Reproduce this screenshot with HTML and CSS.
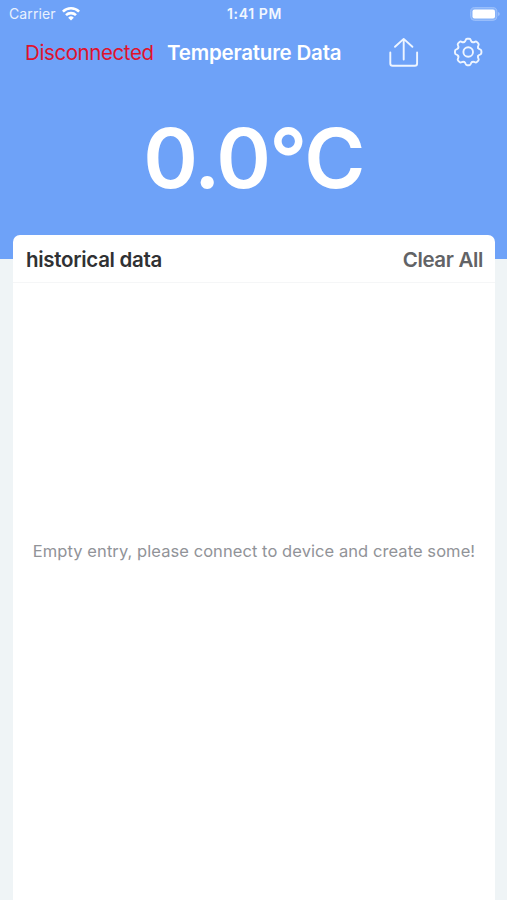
FILE: index.html
```
<!DOCTYPE html>
<html lang="en">
<head>
<meta charset="utf-8">
<title>Temperature Data</title>
<link rel="stylesheet" href="styles.css">
</head>
<body>
<div class="hero">
  <div class="status">
    <div class="carrier"><span>Carrier</span>
      <svg class="wifi" width="18" height="14" viewBox="0 0 18 14" fill="none" stroke="#fff" stroke-width="2.6"><path d="M.9 4.6a11.6 11.6 0 0 1 16.2 0M4 8.1a7.2 7.2 0 0 1 10 0"/><path d="M9 13.5 6.2 10.7a4 4 0 0 1 5.6 0z" fill="#fff" stroke="none"/></svg>
    </div>
    <div class="time">1:41 PM</div>
    <svg class="battery" width="31" height="14" viewBox="0 0 31 14"><rect x="1.6" y=".6" width="26.3" height="12.8" rx="4" fill="#86b2f9" stroke="#9cc0fb"/><rect x="3.5" y="2.5" width="22.5" height="9" rx="2" fill="#fff"/><path d="M29 5v4q1.8-.6 1.8-2t-1.8-2z" fill="#9cc0fb"/></svg>
  </div>
  <div class="nav">
    <span class="state">Disconnected</span>
    <h1 class="title">Temperature Data</h1>
    <svg class="share" width="30" height="30" viewBox="0 0 30 30" fill="none" stroke="#eef5ff" stroke-width="1.9" stroke-linecap="round" stroke-linejoin="round"><path d="M1.3 15.5v10.9q0 2.3 2.3 2.3h22.2q2.3 0 2.3-2.3V15.5M14.7 22.5V2M6 9.8l8.7-7.9 8.7 7.9"/></svg>
    <svg class="gear" width="30" height="30" viewBox="-15.2 -15 30 30" fill="none" stroke="#eef5ff" stroke-width="1.9" stroke-linecap="round" stroke-linejoin="round">
      <defs><path id="tooth" d="M-4.1-9.9C-3.1-10.3-2.8-11-2.6-11.8Q-2.2-13.2-1.1-13.2H1.1Q2.2-13.2 2.6-11.8C2.8-11 3.1-10.3 4.1-9.9"/></defs>
      <use href="#tooth"/><use href="#tooth" transform="rotate(45)"/><use href="#tooth" transform="rotate(90)"/><use href="#tooth" transform="rotate(135)"/><use href="#tooth" transform="rotate(180)"/><use href="#tooth" transform="rotate(225)"/><use href="#tooth" transform="rotate(270)"/><use href="#tooth" transform="rotate(315)"/>
      <circle r="4.8"/>
    </svg>
  </div>
  <div class="reading">0.0°C</div>
</div>
<main class="card">
  <div class="head"><h2 class="heading">historical data</h2><span class="clear">Clear All</span></div>
  <div class="empty">Empty entry, please connect to device and create some!</div>
</main>
</body>
</html>
```
FILE: styles.css
```
* { box-sizing: border-box; }
body {
  margin: 0;
  height: 900px;
  overflow: hidden;
  display: flex;
  flex-direction: column;
  background: #eff4f6;
  font-family: Inter, "Liberation Sans", sans-serif;
  white-space: nowrap;
}
h1, h2 { margin: 0; }
.hero { height: 259px; flex: none; background: #6ea2f8; color: #fff; }
.status {
  height: 27px;
  padding: 0 7px 0 9px;
  display: grid;
  grid-template-columns: 1fr auto 1fr;
  align-items: center;
}
.carrier { display: flex; align-items: center; gap: 6px; font-size: 14px; letter-spacing: 0.1px; color: #e9f1fe; }
.time { font-size: 14px; font-weight: 600; letter-spacing: 0.6px; color: #f2f7ff; }
.battery { justify-self: end; }
.nav { height: 50px; padding-left: 25px; display: flex; align-items: center; }
.state, .title { padding-top: 1px; }
.state { width: 142px; font-size: 20.5px; letter-spacing: -0.4px; color: #e0122c; }
.title { width: 222px; font-size: 20.5px; font-weight: 600; letter-spacing: -0.2px; }
.gear { margin-left: 34px; }
.reading {
  height: 162px;
  line-height: 162px;
  text-align: center;
  font-size: 83px;
  font-weight: 600;
  letter-spacing: -1.8px;
}
.card {
  flex: 1;
  margin: -24px 12px 0 13px;
  background: #fff;
  border-radius: 7px 7px 0 0;
  display: flex;
  flex-direction: column;
}
.head {
  height: 48px;
  padding: 1px 12px 0 13px;
  display: flex;
  align-items: center;
  justify-content: space-between;
  border-bottom: 1px solid #f5f6f7;
}
.heading { font-size: 20.5px; font-weight: 600; letter-spacing: -0.3px; color: #303133; }
.clear { font-size: 20.5px; font-weight: 600; letter-spacing: -0.35px; color: #626366; }
.empty { margin-top: 258px; text-align: center; font-size: 16.5px; letter-spacing: 0.07px; line-height: 20px; color: #919398; }
```
